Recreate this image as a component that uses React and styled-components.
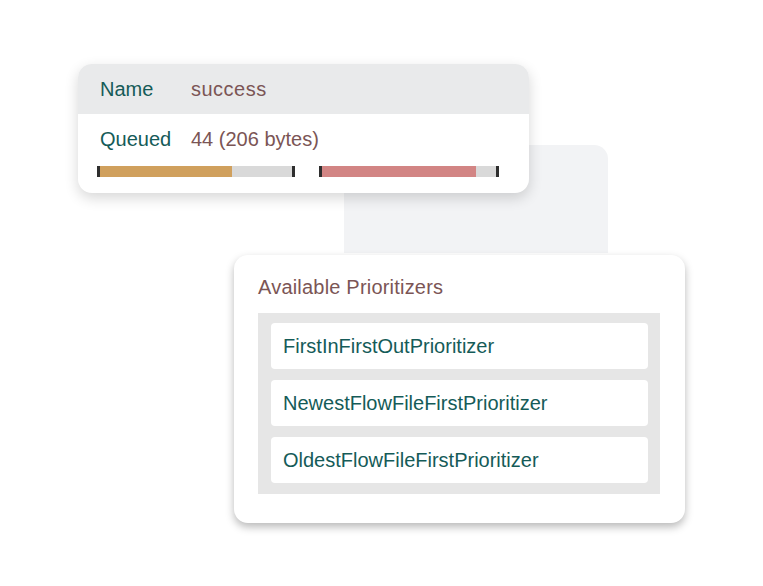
import React from "react";
import styled, { createGlobalStyle } from "styled-components";

const Global = createGlobalStyle`
  html, body { margin: 0; padding: 0; background: #ffffff; }
  body { font-family: "Liberation Sans", Arial, sans-serif; }
`;

const Canvas = styled.div`
  position: relative;
  width: 763px;
  height: 586px;
  overflow: hidden;
  background: #ffffff;
`;

const Card = styled.div`
  position: absolute;
  left: ${(p) => p.$x}px;
  top: ${(p) => p.$y}px;
  width: ${(p) => p.$w}px;
  height: ${(p) => p.$h}px;
  background: #ffffff;
  border-radius: 14px;
  overflow: hidden;
  box-shadow: ${(p) => p.$shadow};
  display: flex;
  flex-direction: column;
  box-sizing: border-box;
`;

const BackPanel = styled.div`
  position: absolute;
  left: 344px;
  top: 145px;
  width: 264px;
  height: 108px;
  background: #f2f3f5;
  border-radius: 14px 14px 0 0;
`;

const HeaderRow = styled.div`
  height: 50px;
  background: #e9eaeb;
  display: flex;
  align-items: center;
  padding-left: 22px;
  font-size: 20px;
  padding-top: 1px;
  box-sizing: border-box;
`;

const InfoRow = styled.div`
  display: flex;
  align-items: center;
  padding: 13px 0 0 22px;
  font-size: 20px;
  line-height: 24px;
`;

const Label = styled.span`
  width: 91px;
  color: #155b58;
`;

const Value = styled.span`
  color: #7b5555;
  letter-spacing: ${(p) => (p.$wide ? "0.5px" : "0")};
`;

const Bars = styled.div`
  display: flex;
  gap: 24px;
  padding: 15px 0 0 19px;
`;

const Bar = styled.div`
  width: ${(p) => p.$w}px;
  height: 11px;
  box-sizing: border-box;
  background: #d9d9d9;
  border-left: 3px solid #2e2e2e;
  border-right: 3px solid #2e2e2e;
  display: flex;
`;

const Fill = styled.div`
  height: 100%;
  background: ${(p) => p.$color};
`;

const Title = styled.div`
  color: #7b5555;
  font-size: 20px;
  line-height: 24px;
  padding: 20px 0 0 24px;
  letter-spacing: 0.2px;
`;

const List = styled.div`
  margin: 14px 25px 0 24px;
  background: #e6e6e6;
  padding: 10px 12px 11px 13px;
  display: flex;
  flex-direction: column;
  gap: 11px;
`;

const Item = styled.div`
  height: 46px;
  background: #ffffff;
  border-radius: 4px;
  display: flex;
  align-items: center;
  padding-left: 12px;
  color: #155b58;
  font-size: 20px;
`;

const prioritizers = [
  "FirstInFirstOutPrioritizer",
  "NewestFlowFileFirstPrioritizer",
  "OldestFlowFileFirstPrioritizer",
];

export default function App() {
  return (
    <>
      <Global />
      <Canvas>
        <BackPanel />
        <Card
          $x={78}
          $y={64}
          $w={451}
          $h={129}
          $shadow="0 5px 14px rgba(0,0,0,0.16)"
        >
          <HeaderRow>
            <Label>Name</Label>
            <Value $wide>success</Value>
          </HeaderRow>
          <InfoRow>
            <Label>Queued</Label>
            <Value>44 (206 bytes)</Value>
          </InfoRow>
          <Bars>
            <Bar $w={198}>
              <Fill $color="#d0a05d" style={{ width: "132px" }} />
            </Bar>
            <Bar $w={180}>
              <Fill $color="#d28584" style={{ width: "154px" }} />
            </Bar>
          </Bars>
        </Card>
        <Card
          $x={234}
          $y={255}
          $w={451}
          $h={268}
          $shadow="0 4px 8px rgba(0,0,0,0.28)"
        >
          <Title>Available Prioritizers</Title>
          <List>
            {prioritizers.map((p) => (
              <Item key={p}>{p}</Item>
            ))}
          </List>
        </Card>
      </Canvas>
    </>
  );
}
